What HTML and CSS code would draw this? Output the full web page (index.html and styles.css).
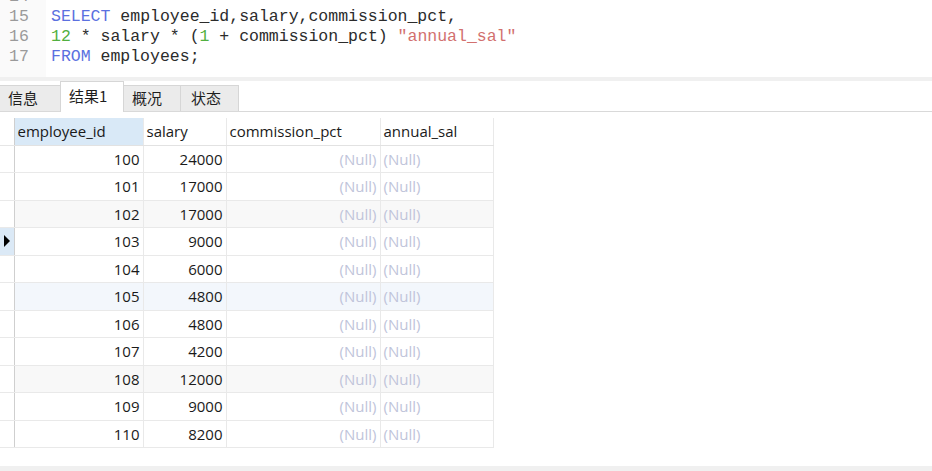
FILE: index.html
```html
<!DOCTYPE html>
<html lang="zh-CN">
<head>
    <meta charset="UTF-8">
    <title>Query</title>
    <link rel="stylesheet" href="styles.css">
</head>
<body>
    <div class="editor">
        <div class="gutter">
            <div class="ln">14</div>
            <div class="ln">15</div>
            <div class="ln">16</div>
            <div class="ln">17</div>
        </div>
        <div class="code">
            <div class="line">&nbsp;</div>
            <div class="line"><span class="kw">SELECT</span> employee_id,salary,commission_pct,</div>
            <div class="line"><span class="num">12</span> * salary * (<span class="num">1</span> + commission_pct) <span class="str">"annual_sal"</span></div>
            <div class="line"><span class="kw">FROM</span> employees;</div>
        </div>
    </div>
    <div class="split"></div>

    <div class="tabs">
        <div class="tab">信息</div>
        <div class="tab active">结果1</div>
        <div class="tab">概况</div>
        <div class="tab">状态</div>
    </div>

    <div class="grid-wrap">
        <table class="grid">
            <colgroup>
                <col class="c0">
                <col class="c1">
                <col class="c2">
                <col class="c3">
                <col class="c4">
            </colgroup>
            <thead>
                <tr>
                    <th class="mark"></th>
                    <th class="sel">employee_id</th>
                    <th>salary</th>
                    <th>commission_pct</th>
                    <th>annual_sal</th>
                </tr>
            </thead>
            <tbody id="rows"></tbody>
        </table>
    </div>

    <div class="status"></div>

    <script>
        // rows of the result set
        const data = [
            [100, 24000], [101, 17000], [102, 17000], [103, 9000],
            [104, 6000], [105, 4800], [106, 4800], [107, 4200],
            [108, 12000], [109, 9000], [110, 8200]
        ];
        const tbody = document.getElementById('rows');

        data.forEach((r, i) => {
            const tr = document.createElement('tr');
            if (i === 2 || i === 8) tr.className = 'alt';
            if (i === 5) tr.className = 'hl';
            const mark = i === 3 ? '<td class="mark cur"><span class="arrow"></span></td>' : '<td class="mark"></td>';
            tr.innerHTML = mark +
                '<td class="n">' + r[0] + '</td>' +
                '<td class="n">' + r[1] + '</td>' +
                '<td class="null">(Null)</td>' +
                '<td class="null left">(Null)</td>';
            tbody.appendChild(tr);
        });
    </script>
</body>
</html>
```

FILE: styles.css
```css
body {
    margin: 0;
    width: 932px;
    height: 471px;
    overflow: hidden;
    background-color: #ffffff;
    font-family: "Open Sans", "Noto Sans CJK SC", sans-serif;
    position: relative;
}

/* sql editor */
.editor {
    height: 77px;
    display: flex;
    overflow: hidden;
}

.gutter {
    width: 46px;
    background-color: #fafafa;
    margin-top: -13px;
}

.ln {
    height: 20px;
    line-height: 20px;
    padding-left: 9px;
    font-family: "Liberation Mono", monospace;
    font-size: 16.5px;
    color: #9a9a9a;
}

.code {
    flex: 1;
    margin-top: -13px;
    padding-left: 5px;
    font-family: "Liberation Mono", monospace;
    font-size: 16.5px;
    color: #2b2b2b;
}

.line {
    height: 20px;
    line-height: 20px;
    white-space: pre;
}

.kw {
    color: #5b70e0;
}

.num {
    color: #52b040;
}

.str {
    color: #d2706e;
}

.split {
    height: 4px;
    background-color: #f0f0f0;
}

/* result tabs */
.tabs {
    height: 30px;
    display: flex;
    align-items: flex-end;
    border-bottom: 1px solid #d9d9d9;
}

.tab {
    height: 26px;
    line-height: 24px;
    box-sizing: border-box;
    padding: 0 8px;
    font-family: "Noto Sans CJK SC", sans-serif;
    font-size: 15px;
    color: #1e1e1e;
    background-color: #ebebeb;
    border: 1px solid #d6d6d6;
    border-bottom: none;
    margin-right: -1px;
}

.tab:nth-child(1) { width: 61px; border-left: none; }
.tab:nth-child(3) { width: 58px; }
.tab:nth-child(4) { width: 59px; padding-left: 10px; }

.tab.active {
    width: 64px;
    height: 31px;
    line-height: 27px;
    margin-bottom: -1px;
    background-color: #ffffff;
    padding-left: 8px;
}

/* result grid */
.grid-wrap {
    padding-top: 6px;
}

.grid {
    border-collapse: collapse;
    table-layout: fixed;
    width: 493px;
    font-size: 15px;
    color: #1a1a1a;
}

.c0 { width: 14px; }
.c1 { width: 129px; }
.c2 { width: 83px; }
.c3 { width: 154px; }
.c4 { width: 113px; }

.grid th,
.grid td {
    height: 27.5px;
    padding: 0 3px;
    box-sizing: border-box;
    border: 1px solid #e9e9e9;
    white-space: nowrap;
    overflow: hidden;
}

.grid th {
    height: 27px;
    font-weight: normal;
    text-align: left;
    border-top: none;
    border-bottom-color: #e2e2e2;
}

.grid th.sel {
    background-color: #d9e9f7;
}

.grid .mark {
    padding: 0;
    border-left: none;
    border-right: 1px solid #cfcfcf;
}

.grid th.mark {
    border-bottom-color: #e6e6e6;
}

.grid td.cur {
    background-color: #dbe9f6;
}

.arrow {
    display: block;
    width: 0;
    height: 0;
    margin-left: 4px;
    border-top: 6px solid transparent;
    border-bottom: 6px solid transparent;
    border-left: 6px solid #000000;
}

.grid td.n {
    text-align: right;
}

.grid td.null {
    text-align: right;
    color: #c0c4da;
}

.grid td.null.left {
    text-align: left;
}

.grid tr.alt td {
    background-color: #f8f8f8;
}

.grid tr.hl td {
    background-color: #f3f7fc;
}

.grid tr.alt td.mark,
.grid tr.hl td.mark {
    background-color: #ffffff;
}

.status {
    position: absolute;
    left: 0;
    right: 0;
    bottom: 0;
    height: 5px;
    background-color: #f0f0f0;
}
```
